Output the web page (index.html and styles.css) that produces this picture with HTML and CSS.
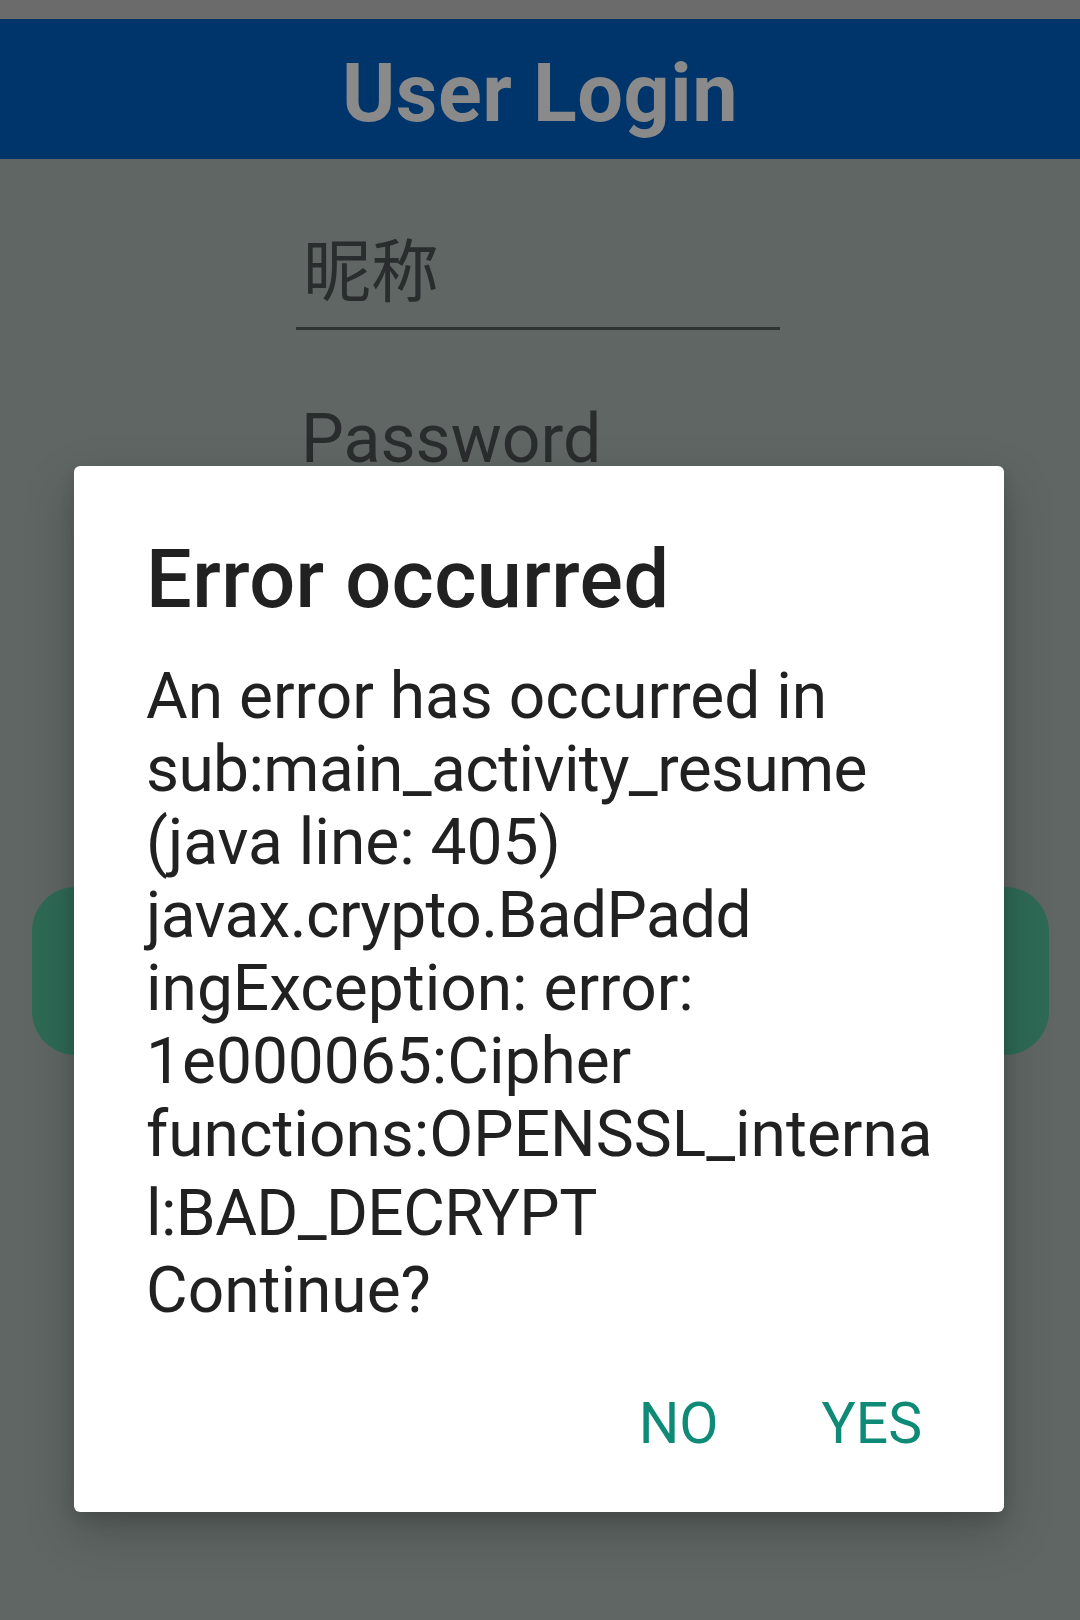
FILE: index.html
```html
<!DOCTYPE html>
<html lang="en">
<head>
<meta charset="utf-8">
<title>User Login</title>
<link rel="stylesheet" href="styles.css">
</head>
<body>
<div class="screen">
  <div class="status"></div>
  <header class="appbar">User Login</header>
  <main class="form">
    <div class="field field-cjk">昵称</div>
    <div class="field">Password</div>
    <div class="login-btn"></div>
  </main>

  <div class="dialog-layer">
    <div class="dialog">
      <h1 class="dialog-title">Error occurred</h1>
      <div class="dialog-body">
        <div class="line">An error has occurred in</div>
        <div class="line line-tight">sub:main_activity_resume</div>
        <div class="line">(java line: 405)</div>
        <div class="line line-tight">javax.crypto.BadPadd</div>
        <div class="line">ingException: error:</div>
        <div class="line">1e000065:Cipher</div>
        <div class="line">functions:OPENSSL_interna</div>
        <div class="line line-gap1 line-tight">l:BAD_DECRYPT</div>
        <div class="line line-gap2">Continue?</div>
      </div>
      <div class="dialog-actions">
        <span class="action">NO</span>
        <span class="action">YES</span>
      </div>
    </div>
  </div>
</div>
</body>
</html>
```

FILE: styles.css
```css
html, body {
  margin: 0;
  padding: 0;
}
body {
  width: 1080px;
  height: 1620px;
  overflow: hidden;
  background: #5f6664;
  font-family: Roboto, "Noto Sans", "Liberation Sans", sans-serif;
}
.screen {
  position: relative;
  width: 1080px;
  height: 1620px;
  background: #5f6664;
}
.status {
  height: 19px;
  background: #6b6b6b;
}
.appbar {
  height: 130px;
  padding-top: 10px;
  background: #00356b;
  color: #8a8a8a;
  font-weight: 700;
  font-size: 81px;
  line-height: 130px;
  text-align: center;
  letter-spacing: 0.5px;
}
.form {
  display: flex;
  flex-direction: column;
  padding-left: 296px;
}
.field {
  width: 479px;
  padding-left: 5px;
  font-size: 68px;
  line-height: 80px;
  padding-bottom: 14px;
  border-bottom: 3px solid #2f3333;
  color: #2a2d2d;
  margin-top: 69px;
}
.field-cjk {
  margin-top: 74px;
  padding-left: 7px;
  width: 477px;
  font-family: Roboto, "Noto Sans CJK SC", sans-serif;
}
.login-btn {
  margin-left: -264px;
  margin-top: 391px;
  width: 1017px;
  height: 168px;
  border-radius: 44px;
  background: #2e6a55;
}
.dialog-layer {
  position: absolute;
  left: 0;
  top: 0;
  width: 1080px;
  height: 1620px;
}
.dialog {
  position: absolute;
  left: 74px;
  top: 466px;
  width: 930px;
  height: 1046px;
  box-sizing: border-box;
  padding: 66px 0 0 72px;
  background: #ffffff;
  border-radius: 6px;
  box-shadow: 0 20px 50px rgba(0, 0, 0, 0.22), 0 6px 14px rgba(0, 0, 0, 0.12);
  color: #212121;
}
.dialog-title {
  margin: 0;
  font-size: 81px;
  font-weight: 500;
  line-height: 96px;
  letter-spacing: 0.4px;
  white-space: nowrap;
}
.dialog-body {
  margin-top: 32px;
  font-size: 64px;
  line-height: 73px;
}
.line {
  white-space: nowrap;
}
.line-tight {
  letter-spacing: -0.6px;
}
.line-gap1 {
  margin-top: 6px;
}
.line-gap2 {
  margin-top: 4px;
}
.dialog-actions {
  display: flex;
  justify-content: flex-end;
  gap: 103px;
  padding-right: 82px;
  margin-top: 65px;
}
.action {
  color: #0e8a76;
  font-size: 57px;
  font-weight: 400;
  line-height: 64px;
}
```
